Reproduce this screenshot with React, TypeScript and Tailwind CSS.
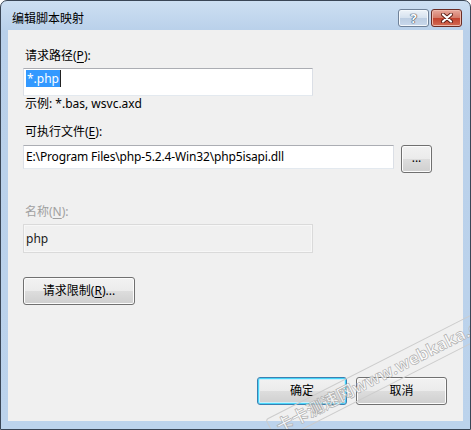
import React from 'react'

const btn =
  'flex items-center justify-center rounded-[3px] border border-[#707070] bg-[linear-gradient(#f2f2f2_0%,#ebebeb_49%,#dddddd_50%,#cfcfcf_100%)] shadow-[inset_0_0_0_1px_#fcfcfc] text-[12px] text-black'

function Mn({ children }: { children: React.ReactNode }) {
  return <span className="underline underline-offset-2">{children}</span>
}

export default function App() {
  return (
    <div className="relative w-[471px] h-[430px] overflow-hidden rounded-t-[7px] border border-[#3a4656] bg-[linear-gradient(180deg,#cddff2_0px,#b9d0ea_30px,#bcd3ec_100%)] font-['Segoe_UI','Noto_Sans','Noto_Sans_CJK_SC',sans-serif] text-[12px] text-black">
      {/* title bar */}
      <div className="h-[29px] flex items-start justify-between pl-[11px] pr-[8px] pt-[8px]">
        <span className="leading-[18px] font-['Noto_Sans_CJK_SC',sans-serif]">编辑脚本映射</span>
        <div className="flex gap-[2px]">
          <div className="w-[31px] h-[18px] rounded-[3px] border border-[#6f8198] bg-[linear-gradient(#eef3f9_0%,#d6e2ef_48%,#bccde2_52%,#c9d9ec_100%)] shadow-[inset_0_0_0_1px_#f4f8fc] flex items-center justify-center">
            <span className="text-[13px] font-bold leading-none text-white [text-shadow:0_0_1px_#2b3a4e,0_0_1px_#2b3a4e,0_0_1px_#2b3a4e]">?</span>
          </div>
          <div className="w-[31px] h-[18px] rounded-[3px] border border-[#6b2c24] bg-[linear-gradient(#e8a99c_0%,#d47b69_48%,#c4432e_52%,#d26b53_100%)] shadow-[inset_0_0_0_1px_#eeb8aa] flex items-center justify-center">
            <svg width="14" height="10" viewBox="0 0 14 10">
              <path d="M3 1.5 L11 8.5 M11 1.5 L3 8.5" stroke="#5a1e15" strokeWidth="4" strokeLinecap="round" />
              <path d="M3 1.5 L11 8.5 M11 1.5 L3 8.5" stroke="#ffffff" strokeWidth="2.2" strokeLinecap="round" />
            </svg>
          </div>
        </div>
      </div>

      {/* client area */}
      <div className="mx-[7px] h-[391px] bg-[#f0f0f0] flex flex-col pl-[15px] pt-[18px]">
        <div className="h-[16px] leading-[16px] pl-[2px]">
          请求路径(<Mn>P</Mn>):
        </div>
        <div className="mt-[4px] w-[290px] h-[28px] bg-white border border-[#abadb3] border-x-[#dbdfe6] border-b-[#e3e9ef] pl-[2px] pt-[1px] flex items-start">
          <span className="bg-[#3399ff] text-white leading-[17px] px-[1px]">*.php</span>
          <span className="w-px h-[17px] bg-[#222]" />
        </div>
        <div className="h-[16px] leading-[16px] pl-[2px]">示例: *.bas, wsvc.axd</div>

        <div className="mt-[12px] h-[16px] leading-[16px] pl-[2px]">
          可执行文件(<Mn>E</Mn>):
        </div>
        <div className="mt-[5px] flex items-start gap-[7px]">
          <div className="w-[371px] h-[24px] bg-white border border-[#abadb3] border-x-[#dbdfe6] border-b-[#e3e9ef] pl-[2px] flex items-center tracking-[-0.15px]">
            E:\Program Files\php-5.2.4-Win32\php5isapi.dll
          </div>
          <div className={btn + ' w-[31px] h-[28px] text-[10px] leading-none pb-[2px]'}>...</div>
        </div>

        <div className="mt-[31px] h-[16px] leading-[16px] pl-[2px] text-[#a0a0a0]">
          名称(<Mn>N</Mn>):
        </div>
        <div className="mt-[4px] w-[290px] h-[29px] bg-[#f0f0f0] border border-[#dadada] shadow-[inset_0_0_0_1px_#f7f7f7] pl-[2px] flex items-center text-[#1a1a1a]">
          php
        </div>

        <div className={btn + ' mt-[24px] w-[112px] h-[28px]'}>
          请求限制(<Mn>R</Mn>)...
        </div>

        <div className="mt-[72px] flex justify-end gap-[9px] pr-[16px]">
          <div className="w-[90px] h-[28px] flex items-center justify-center rounded-[3px] border border-[#3c7fb1] shadow-[inset_0_0_0_1px_#48d6f9,inset_0_0_0_2px_#c8eefc] bg-[linear-gradient(#f2f2f2_0%,#ebebeb_49%,#dddddd_50%,#cfcfcf_100%)]">
            确定
          </div>
          <div className={btn + ' w-[91px] h-[28px]'}>取消</div>
        </div>
      </div>

      {/* watermark */}
      <div className="pointer-events-none absolute left-[388px] top-[370px] -translate-x-1/2 -translate-y-1/2 rotate-[-27deg]">
        <div className="whitespace-nowrap rounded-[3px] border border-[#cccccc] px-[6px] py-[2px] text-[17px] leading-[20px] font-bold text-[rgba(255,255,255,0.75)] [-webkit-text-stroke:0.6px_#a8a8a8] font-['Noto_Sans','Noto_Sans_CJK_SC',sans-serif]">
          卡卡测速网www.webkaka.com
        </div>
      </div>
    </div>
  )
}
